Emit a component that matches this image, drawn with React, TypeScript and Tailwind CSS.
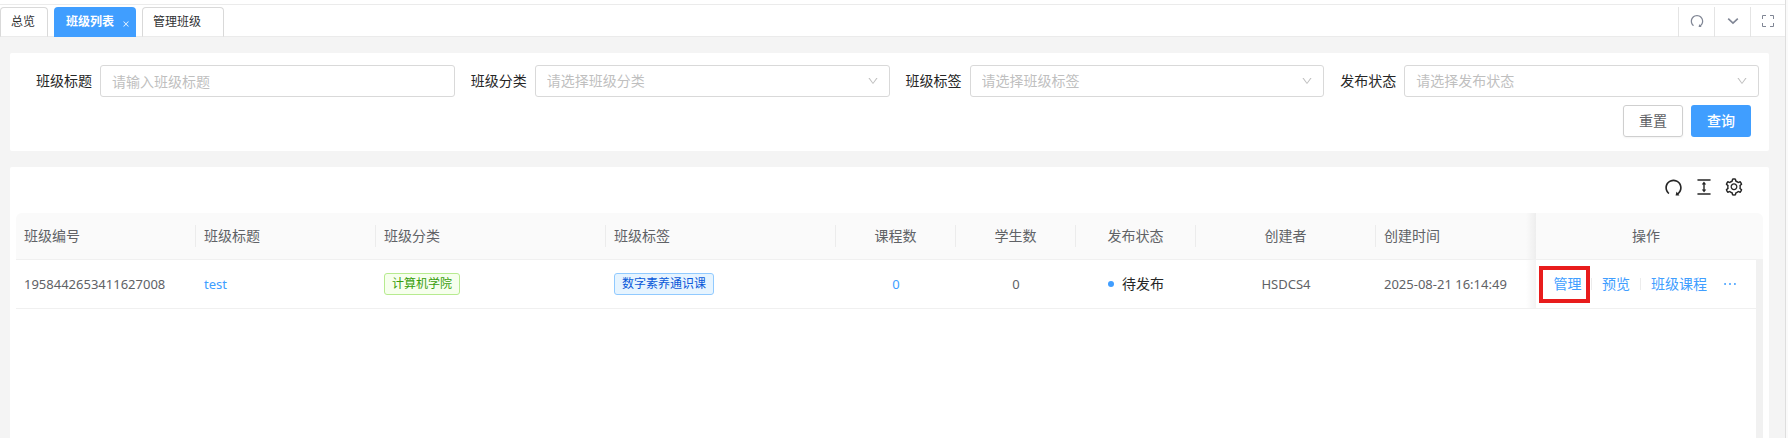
import type { ReactNode } from 'react';
import {
  AiOutlineClose,
  AiOutlineColumnHeight,
  AiOutlineDown,
  AiOutlineEllipsis,
  AiOutlineRedo,
  AiOutlineSetting,
} from 'react-icons/ai';

const filters = [
  { id: 'category', label: '班级分类' },
  { id: 'tag', label: '班级标签' },
  { id: 'status', label: '发布状态' },
];

const columns = [
  { title: '班级编号', width: 'w-[180px]', align: 'text-left' },
  { title: '班级标题', width: 'w-[180px]', align: 'text-left' },
  { title: '班级分类', width: 'w-[230px]', align: 'text-left' },
  { title: '班级标签', width: 'w-[230px]', align: 'text-left' },
  { title: '课程数', width: 'w-[120px]', align: 'text-center' },
  { title: '学生数', width: 'w-[120px]', align: 'text-center' },
  { title: '发布状态', width: 'w-[120px]', align: 'text-center' },
  { title: '创建者', width: 'w-[180px]', align: 'text-center' },
  { title: '创建时间', width: '', align: 'text-left' },
];

function FullscreenIcon() {
  return (
    <svg width="12" height="12" viewBox="0 0 12 12" fill="none" stroke="currentColor" aria-hidden="true">
      <path d="M.5 4V.5H4M8 .5h3.5V4M11.5 8v3.5H8M4 11.5H.5V8" />
    </svg>
  );
}

function ChevronIcon() {
  return (
    <svg width="12" height="8" viewBox="0 0 12 8" fill="none" stroke="currentColor" strokeWidth="1.6" aria-hidden="true">
      <path d="M1.2 1.6 6 6.2l4.800-4.600" />
    </svg>
  );
}

function TabTool({ label, children }: { label: string; children: ReactNode }) {
  return (
    <button
      type="button"
      aria-label={label}
      className="flex h-[30px] w-9 items-center justify-center border-l border-[#e4e4e4] pb-0.5 text-[#808695] last:w-[35px]"
    >
      {children}
    </button>
  );
}

function TabBar() {
  return (
    <header className="border-t border-b border-[#ebebeb] bg-white pt-0.5">
      <div className="-mb-px flex justify-between">
        <nav className="flex gap-1.5 text-xs text-[#303133]">
          <a href="#overview" className="flex h-[30px] w-12 items-center rounded-t-sm border border-b-[#ebebeb] border-[#d9d9d9] pl-2.5">
            总览
          </a>
          <div className="flex h-[30px] w-[82px] items-center justify-between rounded-t-sm bg-[#409eff] pr-1.5 pl-3 text-white">
            <a href="#classes" className="font-bold">班级列表</a>
            <button type="button" aria-label="关闭" className="pt-1">
              <AiOutlineClose size={8} />
            </button>
          </div>
          <a href="#manage" className="flex h-[30px] w-[82px] items-center rounded-t-sm border border-b-[#ebebeb] border-[#d9d9d9] pl-2.5">
            管理班级
          </a>
        </nav>
        <div className="flex">
          <TabTool label="刷新"><AiOutlineRedo size={16} /></TabTool>
          <TabTool label="更多"><ChevronIcon /></TabTool>
          <TabTool label="全屏"><FullscreenIcon /></TabTool>
        </div>
      </div>
    </header>
  );
}

function SearchForm() {
  return (
    <form className="rounded-xs bg-white px-2.5 pt-3 pb-3.5">
      <div className="grid grid-cols-4">
        <div className="flex items-center">
          <label htmlFor="title" className="w-20 shrink-0 pr-2 text-right">班级标题</label>
          <input
            id="title"
            placeholder="请输入班级标题"
            className="h-8 min-w-0 flex-1 rounded-[3px] border border-[#d9d9d9] px-[11px] placeholder:text-[#bfbfbf]"
          />
        </div>
        {filters.map((f) => (
          <div key={f.id} className="flex items-center">
            <label htmlFor={f.id} className="w-20 shrink-0 pr-2 text-right">{f.label}</label>
            <div className="relative min-w-0 flex-1">
              <select
                id={f.id}
                className="h-8 w-full appearance-none rounded-[3px] border border-[#d9d9d9] bg-white px-[11px] text-[#bfbfbf]"
              >
                <option>请选择{f.label}</option>
              </select>
              <AiOutlineDown size={12} className="pointer-events-none absolute top-2.5 right-[11px] text-[#bfbfbf]" />
            </div>
          </div>
        ))}
      </div>
      <div className="mt-2 flex justify-end gap-2 pr-2">
        <button type="reset" className="h-8 w-15 rounded-[3px] border border-[#cfcfcf] text-[#606266] shadow-xs">重置</button>
        <button type="button" className="h-8 w-15 rounded-[3px] bg-[#409eff] font-medium text-white">查询</button>
      </div>
    </form>
  );
}

function ClassTable() {
  return (
    <section className="flex flex-1 flex-col rounded-t-xs bg-white px-1.5">
      <div className="flex h-[46px] items-center justify-end gap-2.5 pr-[19px] pb-1.5 text-[#262626]">
        <button type="button" aria-label="刷新"><AiOutlineRedo size={21} /></button>
        <button type="button" aria-label="密度"><AiOutlineColumnHeight size={20} /></button>
        <button type="button" aria-label="列设置"><AiOutlineSetting size={20} /></button>
      </div>
      <div className="flex flex-1">
        <div className="min-w-0 flex-1">
          <table className="w-full table-fixed border-separate border-spacing-0 text-[#606266]">
            <thead>
              <tr className="h-[47px]">
                {columns.map((c, i) => (
                  <th
                    key={c.title}
                    className={`border-b border-[#f0f0f0] bg-[#fafafa] p-0 font-normal first:rounded-tl-md ${c.width} ${c.align}`}
                  >
                    {i === columns.length - 1 ? (
                      <div className="flex h-[46px] items-center justify-between pl-2">
                        {c.title}
                        <span className="h-full w-2.5 bg-linear-to-l from-black/5 to-transparent" />
                      </div>
                    ) : (
                      <div className="border-r border-[#ececec] px-2 leading-[22px]">{c.title}</div>
                    )}
                  </th>
                ))}
                <th className="w-[220px] border-b border-[#f0f0f0] bg-[#fafafa] p-0 text-center font-normal">操作</th>
              </tr>
            </thead>
            <tbody>
              <tr className="h-[49px] [&>td]:border-b [&>td]:border-[#f0f0f0] [&>td]:py-0">
                <td className="px-2 text-[13px]">1958442653411627008</td>
                <td className="px-2 text-[13px]"><a href="#test" className="text-[#409eff]">test</a></td>
                <td className="px-2">
                  <span className="inline-block rounded-[3px] border border-[#b7eb8f] bg-[#f6ffed] px-[7px] align-middle text-xs leading-5 text-[#389e0d]">
                    计算机学院
                  </span>
                </td>
                <td className="px-2">
                  <span className="inline-block rounded-[3px] border border-[#91caff] bg-[#e6f4ff] px-[7px] align-middle text-xs leading-5 text-[#0958d9]">
                    数字素养通识课
                  </span>
                </td>
                <td className="text-center text-[13px]"><a href="#courses" className="text-[#409eff]">0</a></td>
                <td className="text-center text-[13px]">0</td>
                <td>
                  <div className="flex items-center justify-center gap-2 text-[#262626]">
                    <span className="size-1.5 rounded-full bg-[#409eff]" />
                    待发布
                  </div>
                </td>
                <td className="text-center text-[13px]">HSDCS4</td>
                <td className="p-0 text-[13px]">
                  <div className="flex h-12 items-center justify-between pl-2 whitespace-nowrap">
                    2025-08-21 16:14:49
                    <span className="h-full w-2.5 bg-linear-to-l from-black/5 to-transparent" />
                  </div>
                </td>
                <td className="p-0">
                  <div className="flex items-center pl-[3px] text-[#409eff]">
                    <button type="button" className="h-[37px] w-[51px] border-4 border-[#e81c1c] pl-1.5 whitespace-nowrap">管理</button>
                    <span className="ml-px h-3 w-px bg-[#ececec]" />
                    <button type="button" className="px-2.5">预览</button>
                    <span className="h-3 w-px bg-[#ececec]" />
                    <button type="button" className="px-2.5">班级课程</button>
                    <button type="button" aria-label="更多操作" className="ml-1">
                      <AiOutlineEllipsis size={18} />
                    </button>
                  </div>
                </td>
              </tr>
            </tbody>
          </table>
        </div>
        <div className="flex w-[7px] flex-col">
          <div className="h-[46px] rounded-tr-md bg-[#fafafa]" />
          <div className="flex-1 bg-[#f1f1f1]" />
        </div>
      </div>
    </section>
  );
}

export default function App() {
  return (
    <div className="flex min-h-screen bg-[#fafafa] pr-0.5 font-['Noto_Sans','Noto_Sans_CJK_SC',sans-serif] text-sm text-[#262626]">
      <div className="flex min-w-0 flex-1 flex-col border-r border-[#dedede] bg-[#f4f4f4]">
        <div className="h-1 bg-white" />
        <TabBar />
        <main className="flex flex-1 flex-col gap-4 pt-4 pr-4 pl-2.5">
          <SearchForm />
          <ClassTable />
        </main>
      </div>
    </div>
  );
}
